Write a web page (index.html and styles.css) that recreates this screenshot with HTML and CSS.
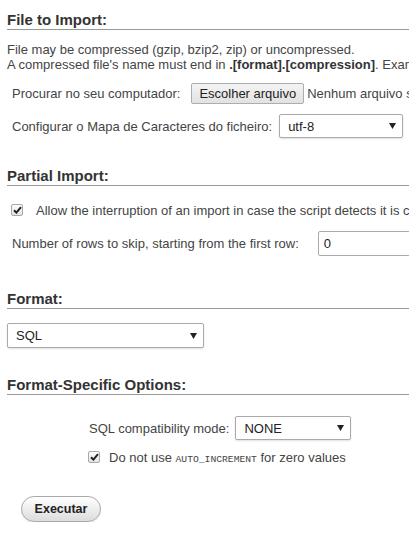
FILE: index.html
```html
<!DOCTYPE html>
<html>
<head>
<meta charset="utf-8">
<link rel="stylesheet" href="styles.css">
</head>
<body>
<div class="page">
  <h3 class="sec sec-first">File to Import:</h3>
  <p class="note">File may be compressed (gzip, bzip2, zip) or uncompressed.<br>A compressed file's name must end in <b>.[format].[compression]</b>. Example: <b>.sql.zip</b></p>
  <div class="row row-file">
    <span class="label">Procurar no seu computador:</span>
    <span class="filebtn">Escolher arquivo</span>
    <span class="nofile">Nenhum arquivo selecionado</span>
  </div>
  <div class="row row-charset">
    <span class="label">Configurar o Mapa de Caracteres do ficheiro:</span>
    <span class="select sel-charset"><span>utf-8</span><svg class="arrow" width="7" height="6" viewBox="0 0 7 6"><polygon points="0,0 7,0 3.5,6" fill="#222"/></svg></span>
  </div>

  <h3 class="sec sec-partial">Partial Import:</h3>
  <div class="row row-allow">
    <span class="cb"><svg width="9" height="8" viewBox="0 0 9 8"><path d="M1 4.2 L3.4 6.6 L8 1.2" fill="none" stroke="#222" stroke-width="2"/></svg></span>
    <span class="cbtext">Allow the interruption of an import in case the script detects it is close to the PHP timeout limit.</span>
  </div>
  <div class="row row-skip">
    <span class="label">Number of rows to skip, starting from the first row:</span>
    <span class="numinput">0</span>
  </div>

  <h3 class="sec sec-format">Format:</h3>
  <div class="row row-sql">
    <span class="select sel-format"><span>SQL</span><svg class="arrow" width="7" height="6" viewBox="0 0 7 6"><polygon points="0,0 7,0 3.5,6" fill="#222"/></svg></span>
  </div>

  <h3 class="sec sec-opts">Format-Specific Options:</h3>
  <div class="row row-compat">
    <span class="label">SQL compatibility mode:</span>
    <span class="select sel-compat"><span>NONE</span><svg class="arrow" width="7" height="6" viewBox="0 0 7 6"><polygon points="0,0 7,0 3.5,6" fill="#222"/></svg></span>
  </div>
  <div class="row row-noauto">
    <span class="cb"><svg width="9" height="8" viewBox="0 0 9 8"><path d="M1 4.2 L3.4 6.6 L8 1.2" fill="none" stroke="#222" stroke-width="2"/></svg></span>
    <span class="cbtext2">Do not use <code>AUTO_INCREMENT</code> for zero values</span>
  </div>

  <div class="row row-go">
    <span class="gobtn">Executar</span>
  </div>
</div>
</body>
</html>
```

FILE: styles.css
```css
html { overflow: hidden; background: #fff; }
body {
  margin: 0;
  font-family: "Liberation Sans", Arial, sans-serif;
  font-size: 13px;
  color: #444;
}
.page {
  width: 700px;
  padding-left: 7px;
}
.sec {
  margin: 0;
  font-size: 15px;
  line-height: 18px;
  font-weight: bold;
  color: #333;
  border-bottom: 1px solid #999;
  white-space: nowrap;
}
.sec-first { margin-top: 11px; }
.sec-partial { margin-top: 29px; }
.sec-format { margin-top: 34px; }
.sec-opts { margin-top: 28px; }

.note {
  margin: 12px 0 0 0;
  line-height: 15px;
  white-space: nowrap;
}
.note b { color: #333; }

.row {
  display: flex;
  align-items: center;
  white-space: nowrap;
}
.row-file { margin-top: 11px; padding-left: 5px; height: 21px; }
.row-file .label { margin-right: 11px; }
.filebtn {
  height: 19px;
  line-height: 19px;
  padding: 0 7px;
  border: 1px solid #adadad;
  border-radius: 2px;
  background: linear-gradient(#f4f4f4, #e2e2e2);
  color: #222;
}
.nofile { margin-left: 3px; }

.row-charset { margin-top: 10px; padding-left: 5px; height: 24px; }
.row-charset .label { margin-right: 7px; }

.select {
  box-sizing: border-box;
  display: flex;
  align-items: center;
  justify-content: space-between;
  background: #fff;
  border: 1px solid #aaa;
  border-radius: 2px;
  box-shadow: 0 1px 2px rgba(0,0,0,0.12);
  color: #222;
  padding: 0 6px 0 8px;
}
.sel-charset { width: 124px; height: 24px; }
.sel-format { width: 197px; height: 25px; }
.sel-compat { width: 116px; height: 24px; }

.row-allow { margin-top: 16px; padding-left: 4px; height: 16px; }
.cb {
  box-sizing: border-box;
  width: 12px;
  height: 12px;
  border: 1px solid #a9a9a9;
  border-radius: 2px;
  background: linear-gradient(#fdfdfd, #e4e4e4);
  display: flex;
  align-items: center;
  justify-content: center;
}
.cbtext { margin-left: 13px; }

.row-skip { margin-top: 13px; padding-left: 5px; height: 25px; }
.row-skip .label { margin-right: 19px; }
.numinput {
  box-sizing: border-box;
  width: 200px;
  height: 25px;
  line-height: 23px;
  padding-left: 5px;
  border: 1px solid #aaa;
  border-radius: 2px;
  color: #222;
}

.row-sql { margin-top: 14px; }

.row-compat { margin-top: 21px; padding-left: 82px; height: 24px; }
.row-compat .label { margin-right: 6px; }

.row-noauto { margin-top: 9px; padding-left: 81px; height: 16px; }
.cbtext2 { margin-left: 9px; }
code {
  font-family: "Liberation Mono", "DejaVu Sans Mono", monospace;
  font-size: 9.7px;
}

.row-go { margin-top: 31px; padding-left: 14px; }
.gobtn {
  box-sizing: border-box;
  width: 80px;
  height: 26px;
  line-height: 24px;
  text-align: center;
  border: 1px solid #aaa;
  border-radius: 13px;
  background: linear-gradient(#ffffff, #dcdcdc);
  font-weight: bold;
  font-size: 12.5px;
  color: #222;
  box-shadow: 0 1px 1px rgba(0,0,0,0.1);
}
```
